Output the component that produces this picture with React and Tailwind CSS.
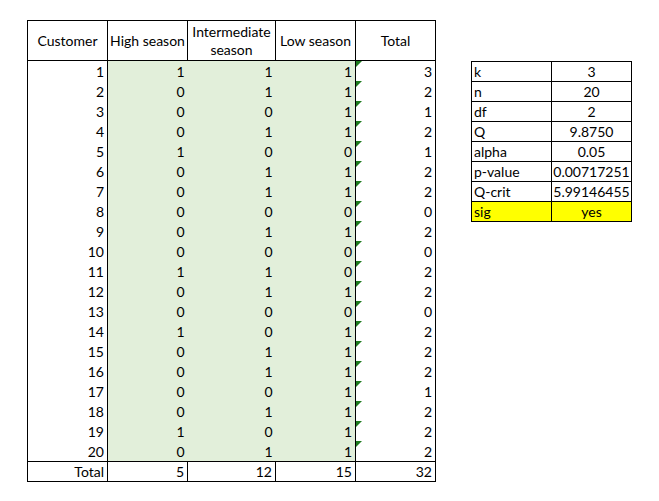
const rows = [
  [1, 1, 1, 1, 3],
  [2, 0, 1, 1, 2],
  [3, 0, 0, 1, 1],
  [4, 0, 1, 1, 2],
  [5, 1, 0, 0, 1],
  [6, 0, 1, 1, 2],
  [7, 0, 1, 1, 2],
  [8, 0, 0, 0, 0],
  [9, 0, 1, 1, 2],
  [10, 0, 0, 0, 0],
  [11, 1, 1, 0, 2],
  [12, 0, 1, 1, 2],
  [13, 0, 0, 0, 0],
  [14, 1, 0, 1, 2],
  [15, 0, 1, 1, 2],
  [16, 0, 1, 1, 2],
  [17, 0, 0, 1, 1],
  [18, 0, 1, 1, 2],
  [19, 1, 0, 1, 2],
  [20, 0, 1, 1, 2],
];

const stats = [
  ["k", "3"],
  ["n", "20"],
  ["df", "2"],
  ["Q", "9.8750"],
  ["alpha", "0.05"],
  ["p-value", "0.00717251"],
  ["Q-crit", "5.99146455"],
];

const Flag = () => (
  <span className="absolute left-0 top-0 w-0 h-0 border-t-[6px] border-r-[6px] border-t-[#1d7a1d] border-r-transparent" />
);

const cell = "p-0 pr-[3px] pt-[2px] h-[20px] leading-[18px] text-right";

export default function App() {
  return (
    <div
      className="bg-white w-[659px] h-[501px] pl-[27px] pt-[20px] flex gap-[35px] text-[14px] text-black"
      style={{ fontFamily: "Lato, 'Liberation Sans', sans-serif" }}
    >
      <table className="border-collapse table-fixed h-fit w-[409px]">
        <colgroup>
          <col className="w-[80px]" />
          <col className="w-[80px]" />
          <col className="w-[88px]" />
          <col className="w-[80px]" />
          <col className="w-[80px]" />
        </colgroup>
        <thead>
          <tr className="h-[40px]">
            <th className="border border-black font-normal text-center leading-[18px] p-0 whitespace-nowrap">Customer</th>
            <th className="border border-black font-normal text-center leading-[18px] p-0 whitespace-nowrap">High season</th>
            <th className="border border-black font-normal text-center leading-[18px] p-0">
              Intermediate
              <br />
              season
            </th>
            <th className="border border-black font-normal text-center leading-[18px] p-0 whitespace-nowrap">Low season</th>
            <th className="border border-black font-normal text-center leading-[18px] p-0">Total</th>
          </tr>
        </thead>
        <tbody>
          {rows.map((r) => (
            <tr key={r[0]}>
              <td className={`${cell} border-l border-r border-black`}>{r[0]}</td>
              <td className={`${cell} bg-[#e2efda]`}>{r[1]}</td>
              <td className={`${cell} bg-[#e2efda]`}>{r[2]}</td>
              <td className={`${cell} bg-[#e2efda]`}>{r[3]}</td>
              <td className={`${cell} relative border-l border-r border-black`}>
                <Flag />
                {r[4]}
              </td>
            </tr>
          ))}
          <tr>
            <td className="border border-black text-right pr-[3px] h-[20px] leading-[18px] p-0">Total</td>
            <td className="border border-black text-right pr-[3px] h-[20px] leading-[18px] p-0">5</td>
            <td className="border border-black text-right pr-[3px] h-[20px] leading-[18px] p-0">12</td>
            <td className="border border-black text-right pr-[3px] h-[20px] leading-[18px] p-0">15</td>
            <td className="border border-black text-right pr-[3px] h-[20px] leading-[18px] p-0">32</td>
          </tr>
        </tbody>
      </table>

      <div className="pt-[41px]">
        <table className="border-collapse table-fixed w-[161px]">
          <colgroup>
            <col className="w-[80px]" />
            <col className="w-[80px]" />
          </colgroup>
          <tbody>
            {stats.map(([k, v]) => (
              <tr key={k}>
                <td className="border border-black text-left pl-[2px] h-[20px] leading-[18px] p-0">{k}</td>
                <td className="border border-black text-center h-[20px] leading-[18px] p-0">{v}</td>
              </tr>
            ))}
            <tr className="bg-[#ffff00]">
              <td className="border border-black text-left pl-[2px] h-[20px] leading-[18px] p-0">sig</td>
              <td className="border border-black text-center h-[20px] leading-[18px] p-0">yes</td>
            </tr>
          </tbody>
        </table>
      </div>
    </div>
  );
}
